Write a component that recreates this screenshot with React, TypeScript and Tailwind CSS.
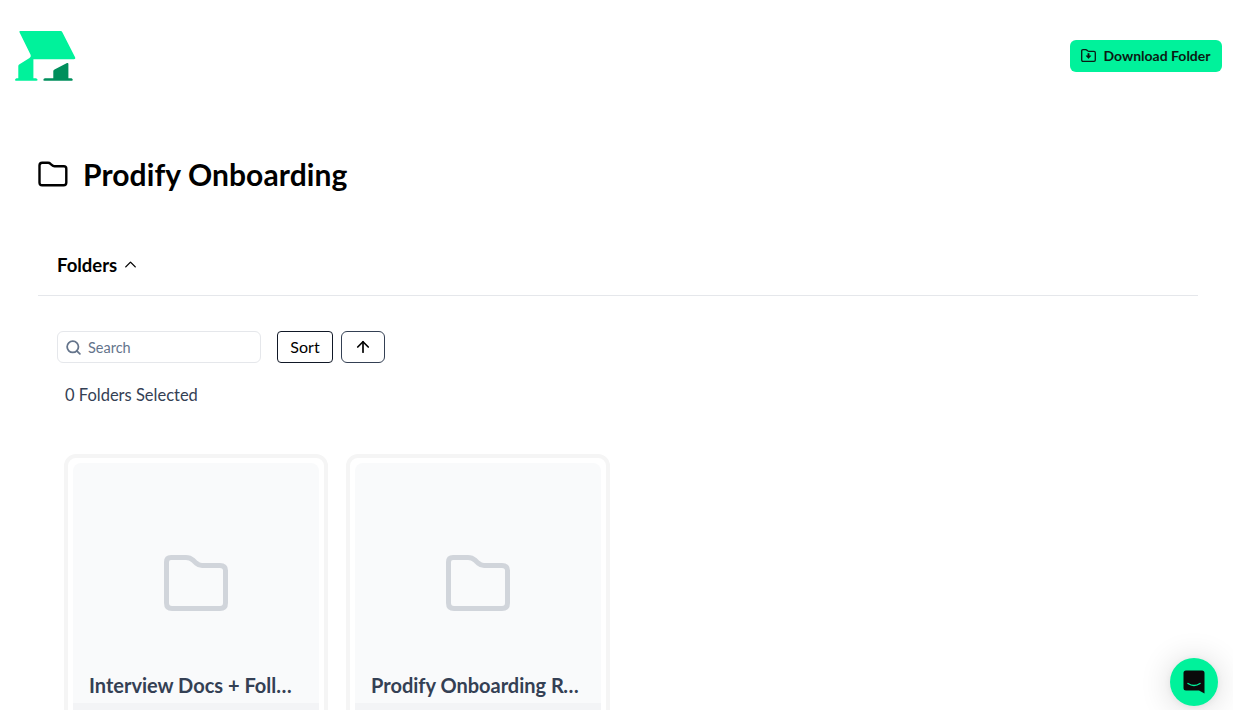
import React from "react";
import { Search, ArrowUp, ChevronUp } from "lucide-react";

const FONT = "font-['Lato','Noto_Sans',sans-serif]";

function Logo() {
  return (
    <svg width="62" height="52" viewBox="0 0 62 52" className="block">
      <path d="M4.500 2.200 Q4 1 5.200 1 L45.800 1 Q46.700 1 47.200 2 L60.200 27.500 Q60.800 29.300 59 29.300 L19.500 29.300 L18.400 29.300 L18.400 48.300 L21 48.300 Q22.600 48.800 22.600 50 Q22.400 50.800 21.400 50.800 L1 50.800 Q0 50.800 0 50 Q0 48.800 1.500 48.300 L3.300 48.300 L3.300 36 Q3.300 35 4.500 34.300 L14.500 28 Q16.200 27 15.700 25 Z" fill="#00f29b" />
      <path d="M29.500 50.800 Q28.200 50.800 28.300 50 Q28.500 48.600 30 48.300 L38.300 48.300 L38.300 41 Q38.300 40 39.500 39.400 L52 33 Q53.400 32.500 53.400 34 L53.400 48.300 L56.500 48.300 Q57.800 48.700 57.800 50 Q57.600 50.800 56.800 50.800 Z" fill="#008f5c" />
    </svg>
  );
}

function BigFolder() {
  return (
    <svg width="30" height="26" viewBox="0 0 30 26" fill="none" stroke="#000" strokeWidth="2.400" strokeLinejoin="round">
      <path d="M1.500 4.500 Q1.500 1.800 4.200 1.800 L10 1.800 Q11.500 1.800 12.500 2.800 L14 4.200 Q15 5.200 16.500 5.200 L25.800 5.200 Q28.300 5.200 28.300 7.700 L28.300 21.500 Q28.300 24.200 25.600 24.200 L4.200 24.200 Q1.500 24.200 1.500 21.500 Z" />
    </svg>
  );
}

function DownloadFolderIcon() {
  return (
    <svg width="15" height="13" viewBox="0 0 15 13" fill="none" stroke="#0b1a14" strokeWidth="1.300" strokeLinejoin="round" className="shrink-0">
      <path d="M0.700 2 Q0.700 0.700 2 0.700 L4.700 0.700 Q5.500 0.700 6 1.200 L6.700 1.900 Q7.200 2.400 8 2.400 L13 2.400 Q14.300 2.400 14.300 3.700 L14.300 11 Q14.300 12.300 13 12.300 L2 12.300 Q0.700 12.300 0.700 11 Z" />
      <path d="M6.800 4.500 H8.200 V6.800 H10 L7.500 9.600 L5 6.800 H6.800 Z" fill="#0b1a14" strokeWidth="0.500" />
    </svg>
  );
}

function CardFolder() {
  return (
    <svg width="64" height="56" viewBox="0 0 64 56" fill="none" stroke="#d1d5db" strokeWidth="5" strokeLinejoin="round">
      <path d="M2.500 7 Q2.500 2.500 7 2.500 L22 2.500 Q26 2.500 29 5.200 L32 8 Q35 10.500 38 10.500 L56 10.500 Q61.500 10.500 61.500 15.500 L61.500 48 Q61.500 53.500 56 53.500 L8 53.500 Q2.500 53.500 2.500 48 Z" />
    </svg>
  );
}

function ChatIcon() {
  return (
    <svg width="22" height="24" viewBox="0 0 22 24">
      <path d="M3 0.500 H19 Q21.500 0.500 21.500 3 V23.500 L16 20.500 H3 Q0.500 20.500 0.500 18 V3 Q0.500 0.500 3 0.500 Z" fill="#0a0a0a" />
      <path d="M5 13.500 Q11 17.500 17 13.500" fill="none" stroke="#00f29b" strokeWidth="1.500" strokeLinecap="round" />
    </svg>
  );
}

function Card({ title }: { title: string }) {
  return (
    <div className="h-[280px] w-[264px] shrink-0 rounded-[12px] border-[4px] border-[#f5f5f5] bg-white p-[5px] pb-0">
      <div className="rounded-t-[8px] bg-[#f9fafb]">
        <div className="flex h-[148px] items-end justify-center">
          <CardFolder />
        </div>
        <div className="mt-[61px] h-[31px] px-4">
          <p className="w-[208px] truncate text-[20px] font-bold leading-[26px] text-[#344054]">{title}</p>
        </div>
      </div>
      <div className="h-[40px] bg-[#f3f4f6]" />
    </div>
  );
}

export default function App() {
  return (
    <div className={`relative h-[710px] w-full overflow-hidden bg-white ${FONT}`}>
      <header className="flex items-start justify-between pl-[15px] pr-[11px] pt-[30px]">
        <Logo />
        <button className="mt-[10px] flex h-[32px] w-[152px] items-center justify-center gap-[7px] rounded-[6px] bg-[#00f29b] pb-[1px] text-[14px] font-bold text-[#0b1a14]">
          <DownloadFolderIcon />
          Download Folder
        </button>
      </header>

      <main className="mx-[35px] mt-[74px] pl-[3px]">
        <div className="flex h-[36px] items-center gap-[15px]">
          <BigFolder />
          <h1 className="text-[30px] font-bold leading-[36px] tracking-[0.1px] text-black">Prodify Onboarding</h1>
        </div>

        <div className="mt-[44px] flex h-[60px] items-center gap-[4px] border-b border-[#e5e7eb] pb-[2px] pl-[19px]">
          <span className="text-[18.500px] font-bold leading-6 text-black">Folders</span>
          <ChevronUp size={19} strokeWidth={1.750} className="text-black" />
        </div>

        <div className="mt-[35px] flex items-center pl-[19px]">
          <div className="flex h-[32px] w-[204px] items-center gap-[6px] rounded-[6px] border border-[#e5e7eb] bg-white pl-[7px]">
            <Search size={17} strokeWidth={2.500} className="text-[#64748b]" />
            <span className="pt-[1px] text-[14.500px] text-[#64748b]">Search</span>
          </div>
          <button className="ml-[16px] h-[32px] w-[56px] rounded-[4px] border border-[#111827] text-[16px] text-black">Sort</button>
          <button className="ml-[8px] flex h-[32px] w-[44px] items-center justify-center rounded-[6px] border border-[#344054] text-black">
            <ArrowUp size={18} strokeWidth={2.250} />
          </button>
        </div>

        <p className="mt-[21px] pl-[27px] text-[16.500px] leading-[22px] text-[#344054]">0 Folders Selected</p>

        <div className="mt-[48px] flex gap-[18px] pl-[26px]">
          <Card title="Interview Docs + Follow-Up" />
          <Card title="Prodify Onboarding Resources" />
        </div>
      </main>

      <button className="absolute left-[1170px] top-[658px] flex h-[48px] w-[48px] items-center justify-center rounded-full bg-[#00f29b] shadow-[0_1px_6px_rgba(0,0,0,0.06),0_2px_32px_rgba(0,0,0,0.16)]">
        <ChatIcon />
      </button>
    </div>
  );
}
